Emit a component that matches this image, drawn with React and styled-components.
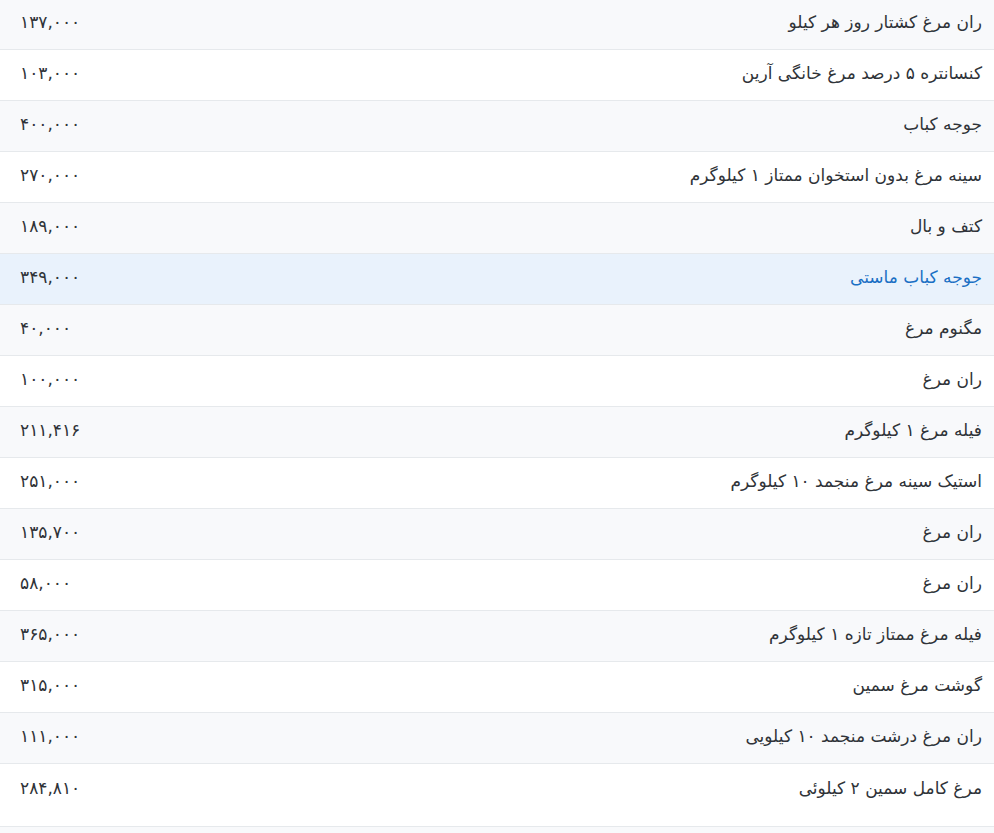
import React from "react";
import styled, { createGlobalStyle } from "styled-components";

const items = [
  { name: "ران مرغ کشتار روز هر کیلو", price: "۱۳۷,۰۰۰" },
  { name: "کنسانتره ۵ درصد مرغ خانگی آرین", price: "۱۰۳,۰۰۰" },
  { name: "جوجه کباب", price: "۴۰۰,۰۰۰" },
  { name: "سینه مرغ بدون استخوان ممتاز ۱ کیلوگرم", price: "۲۷۰,۰۰۰" },
  { name: "کتف و بال", price: "۱۸۹,۰۰۰" },
  { name: "جوجه کباب ماستی", price: "۳۴۹,۰۰۰", active: true },
  { name: "مگنوم مرغ", price: "۴۰,۰۰۰" },
  { name: "ران مرغ", price: "۱۰۰,۰۰۰" },
  { name: "فیله مرغ ۱ کیلوگرم", price: "۲۱۱,۴۱۶" },
  { name: "استیک سینه مرغ منجمد ۱۰ کیلوگرم", price: "۲۵۱,۰۰۰" },
  { name: "ران مرغ", price: "۱۳۵,۷۰۰" },
  { name: "ران مرغ", price: "۵۸,۰۰۰" },
  { name: "فیله مرغ ممتاز تازه ۱ کیلوگرم", price: "۳۶۵,۰۰۰" },
  { name: "گوشت مرغ سمین", price: "۳۱۵,۰۰۰" },
  { name: "ران مرغ درشت منجمد ۱۰ کیلویی", price: "۱۱۱,۰۰۰" },
  { name: "مرغ کامل سمین ۲ کیلوئی", price: "۲۸۴,۸۱۰" },
];

const GlobalStyle = createGlobalStyle`
  body {
    margin: 0;
    background: #ffffff;
    font-family: "DejaVu Sans", "Noto Sans", sans-serif;
    overflow: hidden;
  }
`;

const Page = styled.div`
  direction: rtl;
  margin-top: -1px;
  width: 994px;
`;

const List = styled.div`
  display: flex;
  flex-direction: column;
`;

const Row = styled.div`
  display: flex;
  justify-content: space-between;
  align-items: flex-start;
  height: 51px;
  flex-shrink: 0;
  box-sizing: border-box;
  padding: 11px 12px 0 20px;
  border-bottom: 1px solid #e6e9ec;
  background: ${(p) => (p.active ? "#e9f2fc" : p.odd ? "#f8f9fb" : "#ffffff")};
  color: ${(p) => (p.active ? "#1a6fc4" : "#2f3338")};

  &:last-child {
    height: 63px;
    padding-top: 12px;
  }
`;

const Name = styled.span`
  font-size: 17px;
  line-height: 24px;
`;

const Price = styled.span`
  font-size: 17px;
  line-height: 24px;
  color: #2f3338;
`;

const Footer = styled.div`
  height: 20px;
  background: #f8f9fb;
`;

const App = () => {
  return (
    <>
      <GlobalStyle />
      <Page>
        <List>
          {items.map((it, i) => (
            <Row key={i} odd={i % 2 === 0} active={it.active}>
              <Name>{it.name}</Name>
              <Price>{it.price}</Price>
            </Row>
          ))}
        </List>
        <Footer />
      </Page>
    </>
  );
};

export default App;
